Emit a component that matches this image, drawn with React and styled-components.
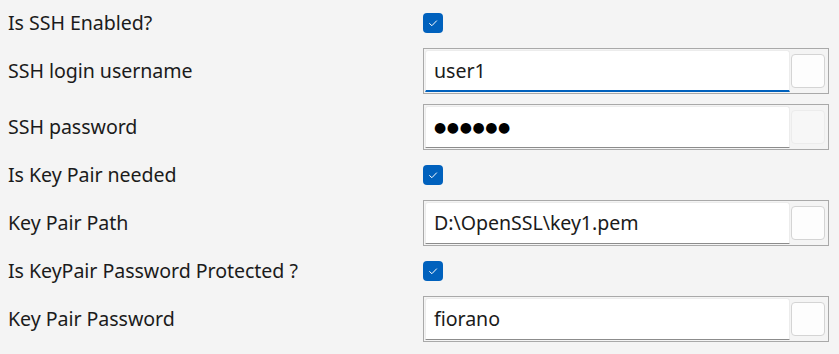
import React from "react";
import styled, { createGlobalStyle } from "styled-components";

const Global = createGlobalStyle`
  html, body { background: #f4f4f4; }
  body {
    margin: 8px;
    font-family: "Noto Sans", "Open Sans", sans-serif;
    color: #1b1b1b;
  }
`;

const Form = styled.div`
  display: grid;
  grid-template-columns: 415px 406px;
  row-gap: 10px;
`;

const Label = styled.div`
  display: flex;
  align-items: center;
  height: ${(p) => (p.$check ? 30 : 46)}px;
  font-size: 19.6px;
  line-height: 1;
  white-space: nowrap;
  letter-spacing: -0.05px;
`;

const CheckCell = styled.div`
  display: flex;
  align-items: center;
  height: 30px;
`;

const CheckBox = styled.div`
  width: 20px;
  height: 20px;
  border-radius: 4px;
  background: #0061bd;
  display: flex;
  align-items: center;
  justify-content: center;
`;

const FieldBox = styled.div`
  height: 46px;
  box-sizing: border-box;
  border: 1px solid #a9a9a9;
  padding: 1px 3px 1px 1px;
  display: flex;
  align-items: center;
  gap: 1px;
`;

const TextArea = styled.div`
  flex: 1;
  height: 42px;
  box-sizing: border-box;
  background: #ffffff;
  border: 1px solid #ececec;
  border-bottom: ${(p) => (p.$focused ? "2px solid #0061bd" : "1px solid #8c8c8c")};
  border-radius: 3px 3px 0 0;
  display: flex;
  align-items: center;
  padding: 0 0 ${(p) => (p.$focused ? 0 : 1)}px 8px;
  font-size: 19.6px;
  letter-spacing: -0.05px;
  color: #1b1b1b;
  white-space: nowrap;
`;

const Dots = styled.span`
  font-size: 14px;
  letter-spacing: 0.6px;
  color: #000;
  font-family: "DejaVu Sans", sans-serif;
`;

const Btn = styled.div`
  width: 34px;
  height: 34px;
  box-sizing: border-box;
  border-radius: 4px;
  border: 1px solid ${(p) => (p.$disabled ? "#ececec" : "#d4d4d4")};
  background: ${(p) => (p.$disabled ? "#f7f7f7" : "#fdfdfd")};
`;

const Check = () => (
  <CheckBox>
    <svg width="12" height="12" viewBox="0 0 12 12">
      <path d="M2.3 6.3 L4.9 8.7 L9.8 3.6" fill="none" stroke="#fff" strokeWidth="1" />
    </svg>
  </CheckBox>
);

const rows = [
  { label: "Is SSH Enabled?", type: "check" },
  { label: "SSH login username", type: "text", value: "user1", focused: true },
  { label: "SSH password", type: "password", disabled: true },
  { label: "Is Key Pair needed", type: "check" },
  { label: "Key Pair Path", type: "text", value: "D:\\OpenSSL\\key1.pem" },
  { label: "Is KeyPair Password Protected ?", type: "check" },
  { label: "Key Pair Password", type: "text", value: "fiorano" },
];

export default function App() {
  return (
    <>
      <Global />
      <Form>
        {rows.map((r) => (
          <React.Fragment key={r.label}>
            <Label $check={r.type === "check"}>{r.label}</Label>
            {r.type === "check" ? (
              <CheckCell>
                <Check />
              </CheckCell>
            ) : (
              <FieldBox>
                <TextArea $focused={r.focused}>
                  {r.type === "password" ? <Dots>●●●●●●</Dots> : r.value}
                </TextArea>
                <Btn $disabled={r.disabled} />
              </FieldBox>
            )}
          </React.Fragment>
        ))}
      </Form>
    </>
  );
}
